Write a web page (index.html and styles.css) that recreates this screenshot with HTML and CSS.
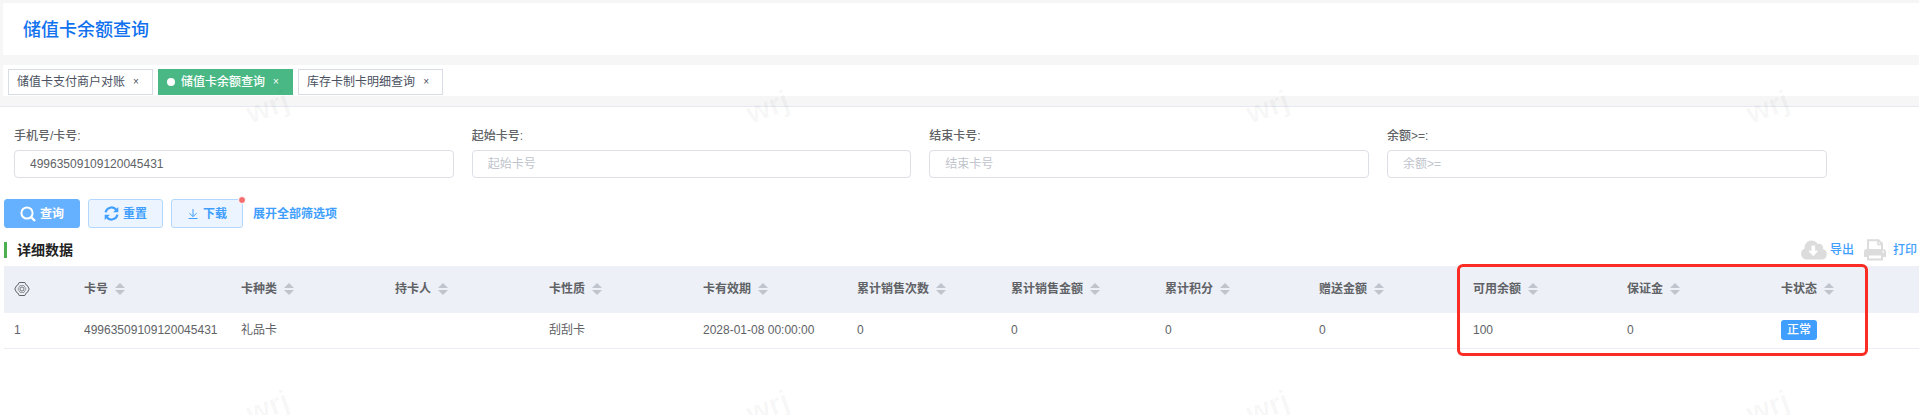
FILE: index.html
```html
<!DOCTYPE html>
<html lang="zh">
<head>
    <meta charset="UTF-8">
    <meta name="viewport" content="width=device-width, initial-scale=1.0">
    <title>储值卡余额查询</title>
    <link rel="stylesheet" href="styles.css">
</head>

<body>

<header class="page-header">
    <h1>储值卡余额查询</h1>
</header>

<!-- 页签 -->
<nav class="tabs">
    <a class="tab" href="#">储值卡支付商户对账<span class="tab-close">×</span></a>
    <a class="tab active" href="#">储值卡余额查询<span class="tab-close">×</span></a>
    <a class="tab" href="#">库存卡制卡明细查询<span class="tab-close">×</span></a>
</nav>

<main class="content">
    <!-- 查询条件 -->
    <form class="filters">
        <div class="field">
            <label for="cardNo">手机号/卡号:</label>
            <input type="text" id="cardNo" value="49963509109120045431">
        </div>
        <div class="field">
            <label for="startNo">起始卡号:</label>
            <input type="text" id="startNo" placeholder="起始卡号">
        </div>
        <div class="field">
            <label for="endNo">结束卡号:</label>
            <input type="text" id="endNo" placeholder="结束卡号">
        </div>
        <div class="field">
            <label for="balance">余额&gt;=:</label>
            <input type="text" id="balance" placeholder="余额&gt;=">
        </div>
    </form>

    <div class="actions">
        <button type="button" class="btn btn-primary">
            <svg width="16" height="16" viewBox="0 0 16 16" fill="none" stroke="currentColor" stroke-width="2">
                <circle cx="7" cy="7" r="5.6"/>
                <path d="M11 11l4 4" stroke-width="2.4"/>
            </svg>
            查询
        </button>
        <button type="button" class="btn">
            <svg width="15" height="15" viewBox="0 0 15 15" fill="none" stroke="currentColor" stroke-width="2.2">
                <path d="M1.6 6.4A6 6 0 0 1 12.2 3.8M13.4 8.6A6 6 0 0 1 2.8 11.2"/>
                <path d="M14.3 1v5.2H9.1zM.7 14V8.8h5.2z" fill="currentColor" stroke="none"/>
            </svg>
            重置
        </button>
        <button type="button" class="btn">
            <svg width="12" height="12" viewBox="0 0 12 12" fill="none" stroke="currentColor">
                <path d="M6 1v7.5M2.5 5.2L6 8.7l3.500-3.500M1.500 10.500h9"/>
            </svg>
            下载
            <i class="badge-dot"></i>
        </button>
        <a class="expand-link" href="#">展开全部筛选项</a>
    </div>

    <!-- 详细数据 -->
    <div class="section-bar">
        <h2>详细数据</h2>
        <div class="tools">
            <a href="#">
                <svg width="26" height="20" viewBox="0 0 26 20">
                    <path d="M6 19.500A5.800 5.800 0 0 1 3.600 8.400 7 7 0 0 1 16.700 4.100a4 4 0 0 1 5.200 5A5.300 5.300 0 0 1 20.500 19.500z" fill="#dcdcdc"/>
                    <path d="M10.500 5.500h3.600v5.300h3.300l-5.100 5.400-5.100-5.400h3.300z" fill="#fff"/>
                </svg>
                <span>导出</span>
            </a>
            <a href="#" class="tool-print">
                <svg width="22" height="22" viewBox="0 0 22 22">
                    <path d="M4 11V1.200h10.500L18 4.700V11" fill="#fff" stroke="#dcdcdc" stroke-width="2"/>
                    <path d="M14 1v4.500h4" fill="none" stroke="#dcdcdc" stroke-width="1.600"/>
                    <path d="M3 10h16a3 3 0 0 1 3 3v5H0v-5a3 3 0 0 1 3-3z" fill="#dcdcdc"/>
                    <path d="M4 15.500h14v5H4z" fill="#fff" stroke="#dcdcdc" stroke-width="2"/>
                    <circle cx="19.300" cy="12.800" r=".9" fill="#fff"/>
                </svg>
                <span>打印</span>
            </a>
        </div>
    </div>

    <div class="table-wrap">
        <table>
            <colgroup>
                <col class="col-index">
                <col class="col-card">
                <col span="10" class="col-base">
                <col>
            </colgroup>
            <thead>
                <tr>
                    <th>
                        <svg class="setting" width="16" height="16" viewBox="0 0 16 16" fill="none" stroke="#606266">
                            <path d="M5.200 1.500h5.600l1.300 2.400 1.300.7L15.200 8l-1.800 3.400-1.300.7-1.300 2.400H5.200l-1.300-2.400-1.300-.7L.8 8l1.800-3.400 1.300-.7z"/>
                            <path d="M6 4.600h4L12 8l-2 3.400H6L4 8z" stroke-width=".6"/>
                            <circle cx="8" cy="8" r="2" stroke-width=".8"/>
                        </svg>
                    </th>
                    <th>卡号<i class="sort"></i></th>
                    <th>卡种类<i class="sort"></i></th>
                    <th>持卡人<i class="sort"></i></th>
                    <th>卡性质<i class="sort"></i></th>
                    <th>卡有效期<i class="sort"></i></th>
                    <th>累计销售次数<i class="sort"></i></th>
                    <th>累计销售金额<i class="sort"></i></th>
                    <th>累计积分<i class="sort"></i></th>
                    <th>赠送金额<i class="sort"></i></th>
                    <th>可用余额<i class="sort"></i></th>
                    <th>保证金<i class="sort"></i></th>
                    <th>卡状态<i class="sort"></i></th>
                </tr>
            </thead>
            <tbody>
                <tr>
                    <td>1</td>
                    <td>49963509109120045431</td>
                    <td>礼品卡</td>
                    <td></td>
                    <td>刮刮卡</td>
                    <td>2028-01-08 00:00:00</td>
                    <td>0</td>
                    <td>0</td>
                    <td>0</td>
                    <td>0</td>
                    <td>100</td>
                    <td>0</td>
                    <td><span class="tag">正常</span></td>
                </tr>
            </tbody>
        </table>
        <div class="highlight"></div>
    </div>
</main>

<!-- 水印 -->
<div class="watermark" aria-hidden="true">
    <span>wrj</span><span>wrj</span><span>wrj</span><span>wrj</span>
    <span>wrj</span><span>wrj</span><span>wrj</span><span>wrj</span>
</div>

</body>
</html>
```
FILE: styles.css
```css
* {
    box-sizing: border-box;
}

body {
    margin: 0;
    padding-top: 3px;
    min-height: 100vh;
    display: flex;
    flex-direction: column;
    position: relative;
    overflow-x: hidden;
    background: #f6f6f6;
    color: #606266;
    font-family: "Liberation Sans", "Noto Sans CJK SC", sans-serif;
    font-size: 12px;
    line-height: 18px;
}

a {
    color: #409eff;
    text-decoration: none;
}

.page-header {
    margin-left: 3px;
    padding: 14px 20px 12px;
    background: #fff;
}

.page-header h1 {
    margin: 0;
    color: #1171ee;
    font-size: 18px;
    font-weight: 500;
    line-height: 26px;
}

/* 页签 */
.tabs {
    display: flex;
    gap: 5px;
    margin: 10px 0 10px 3px;
    padding: 4px 5px 1px;
    background: #fff;
}

.tab {
    display: flex;
    align-items: center;
    height: 26px;
    padding: 0 8px;
    border: 1px solid #d8dce5;
    background: #fff;
    color: #495060;
}

.tab.active {
    border-color: #4ab884;
    background: #4ab884;
    color: #fff;
    font-weight: 500;
}

.tab.active::before {
    content: "";
    width: 8px;
    height: 8px;
    margin-right: 6px;
    border-radius: 50%;
    background: #fff;
}

.tab-close {
    width: 16px;
    margin-left: 3px;
    font-size: 10px;
    font-weight: 400;
    text-align: center;
}

.content {
    flex: 1;
    border-top: 1px solid #e6e9f2;
    background: #fff;
}

/* 查询条件 */
.filters {
    display: flex;
    margin: 20px 7px 0 5px;
}

.field {
    width: 24%;
    padding: 0 9px;
}

.field label {
    display: block;
    margin-bottom: 5px;
    font-weight: 500;
}

.field input {
    display: block;
    width: 100%;
    height: 28px;
    padding: 0 15px;
    border: 1px solid #dcdfe6;
    border-radius: 4px;
    outline: none;
    background: #fff;
    color: #606266;
    font: inherit;
}

.field input::placeholder {
    color: #c0c4cc;
}

.actions {
    display: flex;
    align-items: center;
    gap: 8px;
    margin: 21px 0 0 4px;
}

.btn {
    display: flex;
    align-items: center;
    gap: 4px;
    position: relative;
    height: 29px;
    padding: 0 15px;
    border: 1px solid #b3d8ff;
    border-radius: 3px;
    background: #ecf5ff;
    color: #409eff;
    font: inherit;
    font-weight: 700;
    cursor: pointer;
}

.btn-primary {
    border-color: #66b1ff;
    background: #66b1ff;
    color: #fff;
}

.badge-dot {
    position: absolute;
    top: -4px;
    right: -4px;
    width: 8px;
    height: 8px;
    border: 1px solid #fff;
    border-radius: 50%;
    background: #f56c6c;
}

.expand-link {
    margin-left: 2px;
    font-weight: 700;
}

/* 详细数据 */
.section-bar {
    display: flex;
    align-items: center;
    justify-content: space-between;
    height: 28px;
    margin: 8px 2px 2px 4px;
}

.section-bar h2 {
    margin: 0;
    padding-left: 10px;
    border-left: 3px solid #4caf50;
    color: #222;
    font-size: 14px;
    font-weight: 700;
    line-height: 16px;
}

.tools {
    display: flex;
    gap: 10px;
}

.tools a {
    display: flex;
    align-items: center;
    gap: 3px;
    font-weight: 500;
}

.tools .tool-print {
    gap: 7px;
}

.table-wrap {
    position: relative;
    margin-left: 4px;
}

table {
    width: 100%;
    table-layout: fixed;
    border-collapse: collapse;
}

.col-index {
    width: 70px;
}

.col-card {
    width: 157px;
}

.col-base {
    width: 154px;
}

th,
td {
    padding: 0 10px;
    text-align: left;
    white-space: nowrap;
}

th {
    height: 47px;
    padding-bottom: 2px;
    background: #edf0f6;
    font-weight: 700;
}

td {
    height: 35px;
    padding-bottom: 1px;
    border-bottom: 1px solid #ebeef5;
}

.setting {
    display: block;
}

/* 排序箭头 */
.sort {
    display: inline-flex;
    flex-direction: column;
    gap: 2px;
    margin-left: 7px;
    vertical-align: middle;
}

.sort::before,
.sort::after {
    content: "";
    border: 5px solid transparent;
}

.sort::before {
    border-top: 0;
    border-bottom-color: #c0c4cc;
}

.sort::after {
    border-bottom: 0;
    border-top-color: #c0c4cc;
}

.tag {
    display: inline-block;
    padding: 0 6px;
    border-radius: 3px;
    background: #409eff;
    color: #fff;
    font-weight: 500;
    line-height: 20px;
}

/* 重点标记框 */
.highlight {
    position: absolute;
    top: -2px;
    left: 1453px;
    width: 411px;
    height: 92px;
    border: 3px solid #fb2c23;
    border-radius: 6px;
}

/* 水印 */
.watermark {
    position: absolute;
    inset: 0;
    display: grid;
    grid-template-columns: repeat(4, 500px);
    grid-auto-rows: 300px;
    padding: 92px 0 0 246px;
    overflow: hidden;
    pointer-events: none;
}

.watermark span {
    justify-self: start;
    align-self: start;
    color: rgba(0, 0, 0, 0.04);
    font-size: 30px;
    font-weight: 700;
    line-height: 30px;
    transform: rotate(-20deg);
}
```
